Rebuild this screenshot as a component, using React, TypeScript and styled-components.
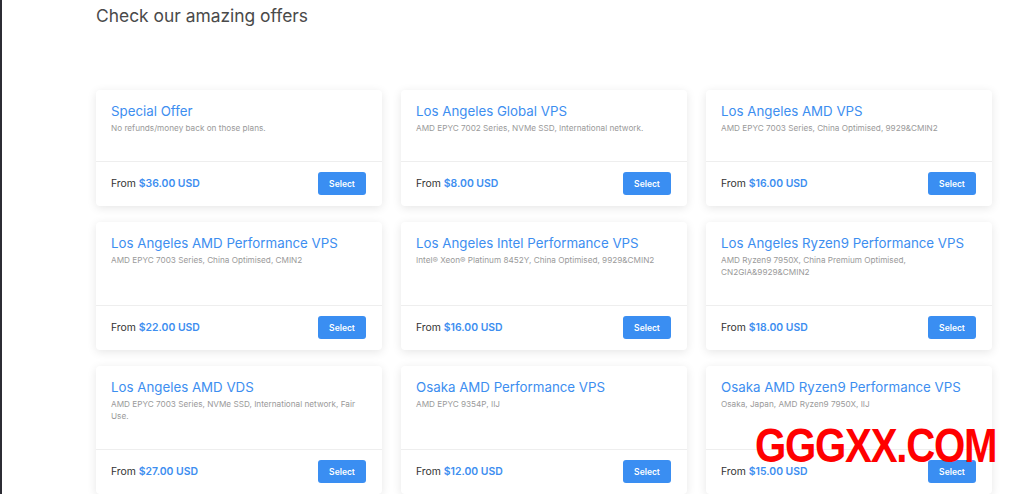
import React from "react";
import styled, { createGlobalStyle } from "styled-components";

const Global = createGlobalStyle`
  html, body { margin: 0; padding: 0; background: #fff; }
  body { font-family: Inter, "Noto Sans", sans-serif; overflow: hidden; }
  * { box-sizing: border-box; }
`;

const Page = styled.div`
  position: relative;
  width: 1024px;
  height: 494px;
  overflow: hidden;
  display: flex;
`;

const EdgeBar = styled.div`
  width: 2px;
  flex: none;
  background: #2c2c34;
`;

const Main = styled.main`
  flex: 1;
  padding: 4px 30px 0 94px;
`;

const Heading = styled.h2`
  margin: 0;
  font-size: 17.4px;
  font-weight: 400;
  line-height: 24px;
  color: #4a4a4a;
`;

const Grid = styled.div`
  margin-top: 62px;
  display: grid;
  grid-template-columns: repeat(3, 286px);
  column-gap: 19px;
  row-gap: 16px;
`;

const Card = styled.div`
  background: #fff;
  border-radius: 4px;
  box-shadow: 0 2px 10px rgba(0, 0, 0, 0.1);
  display: flex;
  flex-direction: column;
`;

const CardHead = styled.div`
  flex: 1;
  padding: 12px 15px 26px;
`;

const PlanName = styled.div`
  font-size: 13.3px;
  line-height: 19px;
  color: #3d8ef0;
  white-space: nowrap;
`;

const PlanDesc = styled.div`
  margin-top: 1px;
  font-size: 8.2px;
  line-height: 12.5px;
  color: #9a9a9a;
`;

const CardFoot = styled.div`
  border-top: 1px solid #eeeeee;
  height: 45px;
  padding: 0 16px 0 15px;
  display: flex;
  align-items: center;
  justify-content: space-between;
`;

const Price = styled.div`
  font-size: 10.4px;
  color: #333;
`;

const Amount = styled.span`
  color: #3d8ef0;
  font-weight: 600;
`;

const SelectButton = styled.button`
  width: 48px;
  height: 23px;
  border: none;
  border-radius: 3px;
  background: #3a8ef2;
  color: #fff;
  font-family: inherit;
  font-size: 8.5px;
  font-weight: 600;
  padding: 0;
  cursor: pointer;
`;

const Watermark = styled.div`
  position: absolute;
  left: 755px;
  top: 421px;
  font-family: "Liberation Sans", Arial, sans-serif;
  font-weight: 700;
  font-size: 49px;
  line-height: 49px;
  color: #ff0000;
  letter-spacing: -1.5px;
  transform: scaleX(0.82);
  transform-origin: left top;
  white-space: nowrap;
`;

type Plan = { name: string; desc: string; price: string };

const plans: Plan[] = [
  { name: "Special Offer", desc: "No refunds/money back on those plans.", price: "$36.00 USD" },
  { name: "Los Angeles Global VPS", desc: "AMD EPYC 7002 Series, NVMe SSD, International network.", price: "$8.00 USD" },
  { name: "Los Angeles AMD VPS", desc: "AMD EPYC 7003 Series, China Optimised, 9929&CMIN2", price: "$16.00 USD" },
  { name: "Los Angeles AMD Performance VPS", desc: "AMD EPYC 7003 Series, China Optimised, CMIN2", price: "$22.00 USD" },
  { name: "Los Angeles Intel Performance VPS", desc: "Intel® Xeon® Platinum 8452Y, China Optimised, 9929&CMIN2", price: "$16.00 USD" },
  { name: "Los Angeles Ryzen9 Performance VPS", desc: "AMD Ryzen9 7950X, China Premium Optimised, CN2GIA&9929&CMIN2", price: "$18.00 USD" },
  { name: "Los Angeles AMD VDS", desc: "AMD EPYC 7003 Series, NVMe SSD, International network, Fair Use.", price: "$27.00 USD" },
  { name: "Osaka AMD Performance VPS", desc: "AMD EPYC 9354P, IIJ", price: "$12.00 USD" },
  { name: "Osaka AMD Ryzen9 Performance VPS", desc: "Osaka, Japan, AMD Ryzen9 7950X, IIJ", price: "$15.00 USD" },
];

export default function App() {
  return (
    <Page>
      <Global />
      <EdgeBar />
      <Main>
        <Heading>Check our amazing offers</Heading>
        <Grid>
          {plans.map((p) => (
            <Card key={p.name}>
              <CardHead>
                <PlanName>{p.name}</PlanName>
                <PlanDesc>{p.desc}</PlanDesc>
              </CardHead>
              <CardFoot>
                <Price>
                  From <Amount>{p.price}</Amount>
                </Price>
                <SelectButton>Select</SelectButton>
              </CardFoot>
            </Card>
          ))}
        </Grid>
      </Main>
      <Watermark>GGGXX.COM</Watermark>
    </Page>
  );
}
